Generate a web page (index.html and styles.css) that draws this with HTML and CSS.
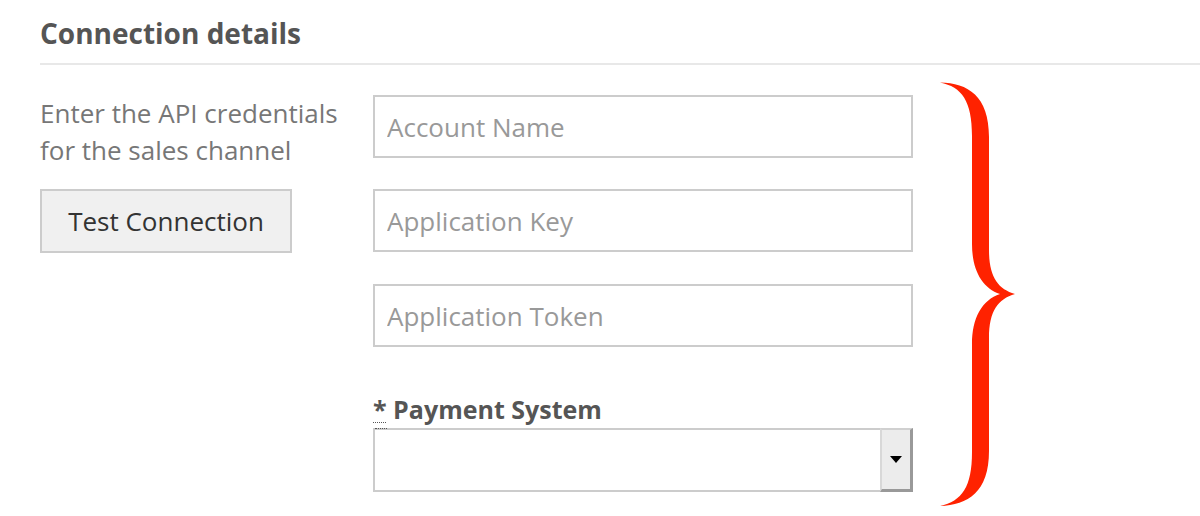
FILE: index.html
```html
<!DOCTYPE html>
<html lang="en">
<head>
<meta charset="utf-8">
<title>Connection details</title>
<link rel="stylesheet" href="styles.css">
</head>
<body>
<section class="panel">
  <h2 class="title">Connection details</h2>
  <div class="row">
    <div class="intro">
      <p class="intro-text">Enter the API credentials for the sales channel</p>
      <button class="btn" type="button">Test Connection</button>
    </div>
    <div class="fields">
      <input class="field" type="text" placeholder="Account Name">
      <input class="field" type="text" placeholder="Application Key">
      <input class="field field-last" type="text" placeholder="Application Token">
      <label class="label"><abbr class="req" title="required">*</abbr> Payment System</label>
      <div class="select">
        <span class="select-marker"></span>
        <span class="select-arrow"><span class="tri"></span></span>
      </div>
    </div>
    <svg class="brace" width="80" height="425" viewBox="0 0 80 425" aria-hidden="true">
      <path d="M 2,0.5 C 30,1 51,14 51,55 L 51,168 C 51,195 60,207 77,212 C 60,217 51,229 51,256 L 51,369 C 51,410 30,423 2,424 C 24,419 34,405 34,370 L 34,262 C 34,236 44,218 62,212 C 44,206 34,188 34,162 L 34,54 C 34,19 24,5 2,0.5 Z" fill="#ff2200"/>
    </svg>
  </div>
</section>
</body>
</html>
```

FILE: styles.css
```css
* { box-sizing: border-box; }
html, body { margin: 0; padding: 0; background: #fff; }
body {
  font-family: "Open Sans", "Noto Sans", sans-serif;
  width: 1200px;
  height: 516px;
  overflow: hidden;
}
.panel { padding-left: 40px; }
.title {
  margin: 0;
  padding-top: 16px;
  padding-bottom: 13px;
  font-size: 28px;
  line-height: 34px;
  font-weight: 700;
  color: #555;
  border-bottom: 2px solid #e8e8e8;
}
.row {
  display: flex;
  align-items: flex-start;
}
.intro {
  width: 333px;
  padding-top: 30px;
}
.intro-text {
  margin: 0;
  max-width: 310px;
  font-size: 26px;
  line-height: 37px;
  color: #777;
}
.btn {
  margin-top: 20px;
  width: 252px;
  height: 64px;
  border: 2px solid #ccc;
  background: #f0f0f0;
  font-family: inherit;
  font-size: 26px;
  color: #333;
  padding: 0;
}
.fields {
  width: 540px;
  padding-top: 30px;
  display: flex;
  flex-direction: column;
}
.field {
  height: 63px;
  margin-bottom: 31px;
  border: 2px solid #ccc;
  padding: 0 12px;
  font-family: inherit;
  font-size: 26px;
  color: #333;
  background: #fff;
  outline: none;
}
.field-last { margin-top: 1px; margin-bottom: 0; }
.field::placeholder { color: #999; opacity: 1; }
.label {
  margin-top: 47px;
  font-size: 25px;
  line-height: 30px;
  font-weight: 700;
  color: #555;
}
.req {
  text-decoration: underline dotted #555;
  text-decoration-thickness: 1px;
  text-underline-offset: 3px;
}
.select {
  position: relative;
  margin-top: 4px;
  height: 64px;
  border: 2px solid #ccc;
  background: #fff;
  display: flex;
  justify-content: flex-end;
}
.select-marker {
  position: absolute;
  left: 0;
  top: -2px;
  width: 12px;
  border-top: 1px dotted #555;
}
.select-arrow {
  margin: -2px -2px -2px 0;
  width: 33px;
  background: #ececec;
  border-left: 2px solid #d8d8d8;
  border-top: 2px solid #d0d0d0;
  border-right: 3px solid #999;
  border-bottom: 3px solid #999;
  display: flex;
  align-items: center;
  justify-content: center;
}
.tri {
  width: 0;
  height: 0;
  border-left: 6px solid transparent;
  border-right: 6px solid transparent;
  border-top: 7px solid #000;
}
.brace {
  display: block;
  margin-top: 17px;
  margin-left: 25px;
  flex: none;
}
```
